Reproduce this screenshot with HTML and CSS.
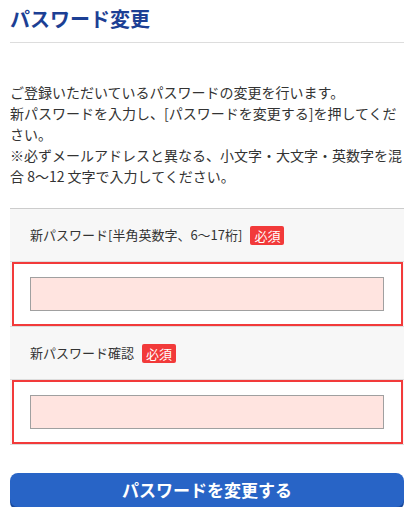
FILE: index.html
```html
<!DOCTYPE html>
<html lang="ja">
<head>
    <meta charset="UTF-8">
    <meta name="viewport" content="width=device-width, initial-scale=1.0">
    <title>パスワード変更</title>
    <link rel="stylesheet" href="styles.css">
</head>
<body>
    <h1 class="page-title">パスワード変更</h1>

    <p class="lead">
        ご登録いただいているパスワードの変更を行います。<br>
        新パスワードを入力し、[パスワードを変更する]を押してください。<br>
        ※必ずメールアドレスと異なる、小文字・大文字・英数字を混合 8～12 文字で入力してください。
    </p>

    <form class="form-table" id="passwordForm">
        <div class="form-label">
            <span>新パスワード[半角英数字、6～17桁]</span>
            <span class="required">必須</span>
        </div>
        <div class="form-row">
            <div class="form-field">
                <input type="password" class="text-input" id="newPassword">
            </div>
        </div>

        <div class="form-label">
            <span>新パスワード確認</span>
            <span class="required">必須</span>
        </div>
        <div class="form-row">
            <div class="form-field">
                <input type="password" class="text-input" id="confirmPassword">
            </div>
        </div>
    </form>

    <button type="button" class="submit-btn">パスワードを変更する</button>
</body>
</html>
```

FILE: styles.css
```css
body {
    margin: 0 10px;
    font-family: "Noto Sans CJK JP", "Noto Sans", sans-serif;
    color: #333;
    background: #fff;
    font-size: 14px;
}

.page-title {
    margin: 0;
    padding: 4px 0 8px;
    font-size: 20px;
    line-height: 30px;
    font-weight: bold;
    color: #1c3f94;
    border-bottom: 1px solid #dddddd;
}

.lead {
    margin: 39px 0 21px;
    line-height: 21px;
}

.form-table {
    border-top: 1px solid #cccccc;
    background: #f7f7f7;
}

.form-label {
    display: flex;
    align-items: center;
    gap: 8px;
    padding: 16px 20px;
    font-size: 13px;
    line-height: 20px;
}

.required {
    display: inline-block;
    width: 34px;
    height: 19px;
    line-height: 19px;
    text-align: center;
    font-size: 13px;
    color: #fff;
    background: #f23a3a;
    border-radius: 2px;
}

.form-row {
    border-top: 1px solid #dddddd;
    border-bottom: 1px solid #dddddd;
}

.form-field {
    margin: 0 1px 0 2px;
    padding: 13px 17px 13px 16px;
    background: #fff;
    border: 2px solid #f23a3a;
}

.text-input {
    display: block;
    width: 100%;
    height: 34px;
    box-sizing: border-box;
    margin: 0;
    border: 1px solid #a0a0a0;
    background: #ffe4e0;
}

.submit-btn {
    display: block;
    width: 100%;
    height: 34px;
    margin-top: 28px;
    padding: 0;
    border: none;
    border-radius: 8px;
    background: #2864c6;
    box-shadow: 0 3px 0 #1a4a9c;
    color: #fff;
    font-family: inherit;
    font-size: 17px;
    font-weight: bold;
    line-height: 34px;
    cursor: pointer;
}
```
